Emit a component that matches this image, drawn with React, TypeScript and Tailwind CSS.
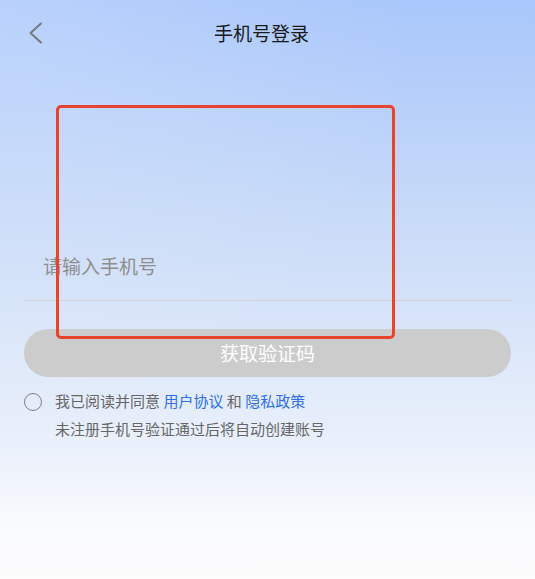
export default function App() {
  return (
    <div className="relative h-[579px] w-full overflow-hidden bg-[radial-gradient(ellipse_at_0%_0%,rgba(255,255,255,0.18),transparent_55%),linear-gradient(180deg,#a9c7fb_0%,#cadcf8_40%,#e2ebfa_67%,#eef3fc_81%,#fafbfd_92%,#fcfcfd_100%)] font-['Noto_Sans_CJK_SC',sans-serif]">
      {/* Header */}
      <div className="flex h-[66px] items-center pl-[28px]">
        <svg width="16" height="24" viewBox="0 0 16 24" fill="none">
          <path d="M13 2.5L2.5 12L13 21.5" stroke="#75797f" strokeWidth="2" strokeLinecap="round" strokeLinejoin="round" />
        </svg>
        <div className="flex-1 pr-[56px] text-center text-[19px] text-[#1a1a1a]">手机号登录</div>
      </div>

      <div className="px-[24px]">
        {/* Phone input */}
        <div className="mt-[170px] border-b border-[#d0d2d6] pb-[6px]">
          <input
            type="tel"
            placeholder="请输入手机号"
            className="h-[58px] w-full bg-transparent pl-[19px] text-[19px] text-[#333] outline-none placeholder:text-[#8e8e8e]"
          />
        </div>

        <button className="mt-[28px] flex h-[48px] w-full items-center justify-center rounded-full bg-[#cccccc] text-[19px] text-white">
          获取验证码
        </button>

        {/* Agreement */}
        <div className="mt-[10px] flex gap-[13px]">
          <div className="mt-[6px] h-[18px] w-[18px] shrink-0 rounded-full border-[1.5px] border-[#808080]" />
          <div className="text-[15px] leading-[28px] text-[#666]">
            <div>
              我已阅读并同意 <span className="text-[#2f6fe6]">用户协议</span> 和{" "}
              <span className="text-[#2f6fe6]">隐私政策</span>
            </div>
            <div>未注册手机号验证通过后将自动创建账号</div>
          </div>
        </div>
      </div>

      {/* Annotation box */}
      <div className="absolute left-[56px] top-[105px] h-[234px] w-[339px] rounded-[5px] border-[3px] border-[#e8432e]" />
    </div>
  );
}
